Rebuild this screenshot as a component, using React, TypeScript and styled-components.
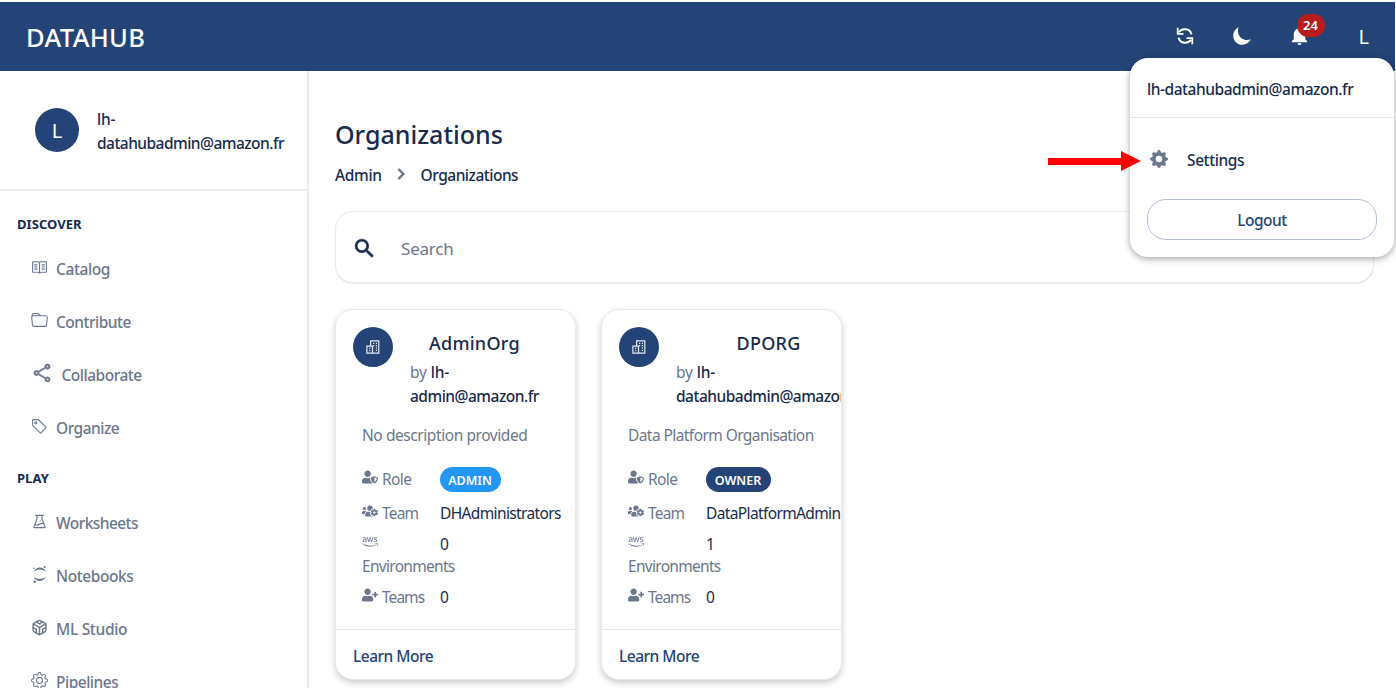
import React from "react";
import styled, { createGlobalStyle, css } from "styled-components";
import { VscBook } from "react-icons/vsc";
import { BsFolder, BsTag, BsGear, BsGearFill } from "react-icons/bs";
import { AiOutlineExperiment } from "react-icons/ai";
import { SiJupyter } from "react-icons/si";
import { FiCodesandbox } from "react-icons/fi";
import { MdNotifications, MdSearch, MdChevronRight, MdOutlineShare } from "react-icons/md";
import { FaUserShield, FaUsersCog, FaUserPlus, FaAws } from "react-icons/fa";
import { IoMoonSharp } from "react-icons/io5";

const navy = "#244377";
const ink = "#172b4d";
const muted = "#6b778c";

const Global = createGlobalStyle`
  * { box-sizing: border-box; }
  body { margin: 0; background: #fff; color: ${ink}; overflow: hidden;
    font-family: "Noto Sans", "Open Sans", sans-serif; }
  svg { display: block; flex: none; }
  svg path[d^="M0 0h24v24H0"] { stroke: none; }
`;

const Label = styled.span<{ $size?: number; $weight?: number; $color?: string; $track?: number }>`
  font-size: ${(p) => p.$size ?? 15.5}px;
  font-weight: ${(p) => p.$weight ?? 400};
  color: ${(p) => p.$color ?? "inherit"};
  letter-spacing: ${(p) => p.$track ?? -0.5}px;
  white-space: nowrap;
`;

const Page = styled.div`
  position: relative;
  height: 688px;
  padding: 2px 1px 0 0;
  overflow: hidden;
  display: flex;
  flex-direction: column;
`;
const TopBar = styled.header`
  height: 69px;
  flex: none;
  background: ${navy};
  color: #fff;
  display: flex;
  align-items: center;
  justify-content: space-between;
  padding: 0 26px 0 26px;
`;
const Tools = styled.div`
  display: flex;
  align-items: center;
  gap: 38px;
  > svg { margin-top: -1px; }
  > span { margin-left: 10px; }
`;
const Bell = styled.div`
  position: relative;
  width: 23px;
  margin: -2px 0 0 -2px;
`;
const Count = styled.span`
  position: absolute;
  left: 9px;
  top: -10px;
  width: 28px;
  height: 23px;
  border-radius: 12px;
  background: #b71c1c;
  font-size: 13px;
  font-weight: 600;
  line-height: 23px;
  text-align: center;
`;
const Body = styled.div`
  flex: 1;
  min-height: 0;
  display: flex;
`;
const Side = styled.aside`
  width: 309px;
  flex: none;
  border-right: 2px solid #ececec;
  overflow: hidden;
`;
const Profile = styled.div`
  height: 120px;
  border-bottom: 2px solid #ececec;
  display: flex;
  align-items: center;
  gap: 18px;
  padding-left: 35px;
`;
const Avatar = styled.div<{ $size: number }>`
  width: ${(p) => p.$size}px;
  height: ${(p) => p.$size}px;
  flex: none;
  border-radius: 50%;
  background: ${navy};
  color: #fff;
  display: flex;
  align-items: center;
  justify-content: center;
  font-size: 20px;
`;
const Stack = styled.div<{ $drop?: number }>`
  display: flex;
  flex-direction: column;
  line-height: 24px;
  padding-top: ${(p) => p.$drop ?? 0}px;
`;
const Section = styled.h2<{ $top: number }>`
  margin: 0;
  padding: ${(p) => p.$top}px 0 8px 17px;
  font-size: 13px;
  line-height: 20px;
  font-weight: 700;
  letter-spacing: 0.05px;
`;
const Item = styled.div<{ $wide?: boolean }>`
  height: 53px;
  color: ${muted};
  display: flex;
  align-items: center;
  gap: ${(p) => (p.$wide ? 9 : 8.5)}px;
  padding-left: ${(p) => (p.$wide ? 30.5 : 30.5)}px;
  svg { margin-top: -3px; }
`;
const Main = styled.main`
  flex: 1;
  padding: 47px 21px 0 26px;
`;
const Title = styled.h1`
  margin: 0;
  font-size: 25px;
  line-height: 32px;
  font-weight: 500;
`;
const Crumbs = styled.div`
  height: 24px;
  margin-top: 13px;
  display: flex;
  align-items: center;
  gap: 8.5px;
  svg { color: ${muted}; margin-top: -3px; }
`;
const panel = css`
  background: #fff;
  border: 1px solid #e9e9e9;
  border-radius: 18px;
`;
const SearchBox = styled.div`
  ${panel}
  height: 73px;
  margin-top: 24px;
  border-bottom-width: 2px;
  display: flex;
  align-items: center;
  gap: 24px;
  padding: 2px 0 0 16px;
`;
const Cards = styled.div`
  display: flex;
  gap: 25px;
  margin-top: 25px;
`;
const CardBox = styled.article`
  ${panel}
  width: 241px;
  height: 371px;
  overflow: hidden;
  box-shadow: 0 3px 6px rgba(0, 0, 0, 0.2);
  display: flex;
  flex-direction: column;
`;
const CardHead = styled.div`
  display: flex;
  gap: 17px;
  padding: 17px 0 0 17px;
  height: 98px;
`;
const Name = styled.div<{ $indent: number }>`
  line-height: 32px;
  padding-left: ${(p) => p.$indent}px;
`;
const Desc = styled.div`
  padding: 15px 0 0 26px;
  height: 42px;
  line-height: 24px;
`;
const Fields = styled.dl`
  margin: 0;
  padding: 16px 0 0 26px;
  flex: 1;
`;
const Field = styled.div<{ $h: number }>`
  display: flex;
  height: ${(p) => p.$h}px;
`;
const Term = styled.dt`
  width: 78px;
  flex: none;
  display: flex;
  flex-wrap: wrap;
  align-content: flex-start;
  gap: 5px 4px;
  line-height: 22px;
  padding-top: 2px;
  color: ${muted};
  svg { margin-top: 1px; }
`;
const Value = styled.dd`
  margin: 0;
  padding-top: 2px;
  line-height: 22px;
`;
const Pill = styled.span<{ $bg: string; $w: number }>`
  display: block;
  width: ${(p) => p.$w}px;
  height: 25px;
  border-radius: 13px;
  margin: -1px 0 0 -0.5px;
  background: ${(p) => p.$bg};
  color: #fff;
  font-size: 12.5px;
  line-height: 27px;
  font-weight: 600;
  text-align: center;
`;
const CardFoot = styled.div`
  height: 50px;
  border-top: 1px solid #e2e2e2;
  padding: 2px 0 0 17px;
  display: flex;
  align-items: center;
`;
const Menu = styled.div`
  position: absolute;
  z-index: 2;
  left: 1130px;
  top: 58px;
  width: 264px;
  height: 199px;
  border-radius: 18px;
  background: #fff;
  box-shadow: 0 2px 7px rgba(0, 0, 0, 0.35);
`;
const MenuHead = styled.div`
  height: 60px;
  border-bottom: 1px solid #e2e2e2;
  display: flex;
  align-items: center;
  padding: 2px 0 0 17px;
`;
const MenuItem = styled.div`
  height: 81px;
  display: flex;
  align-items: center;
  gap: 19.5px;
  padding: 3px 0 0 19.5px;
  svg { color: ${muted}; margin-top: -2px; }
`;
const Logout = styled.button`
  display: block;
  width: 230px;
  height: 41px;
  margin: 0 0 0 17px;
  padding: 1px 0 0;
  border: 1px solid #b5c0d8;
  border-radius: 19px;
  background: #fff;
  color: ${navy};
  font-family: inherit;
`;
const Arrow = styled.svg`
  position: absolute;
  z-index: 3;
  left: 1048px;
  top: 151px;
`;

function SyncIcon() {
  return (
    <svg width="18" height="18" viewBox="0 0 18 18" fill="none" stroke="currentColor" strokeWidth="2.1">
      <path d="M3 5.2C5.4 1.4 14 .6 15.4 7.4M15 12.8C12.6 16.6 4 17.4 2.6 10.6" />
      <path d="M1.7.8v6h5.8M16.3 17.2v-6h-5.8" strokeWidth="1.8" />
    </svg>
  );
}

function BuildingIcon() {
  return (
    <svg width="14" height="14" viewBox="0 0 14 14" fill="none" stroke="#e6ebf5" strokeWidth="1.2">
      <path d="M4.6 6.2V.8h8.2v12.4H.9v-7h5.6v7" />
      <path d="M7 3.4h1.2M9.8 3.4H11M7 5.6h1.2M9.8 5.6H11M9.8 7.9H11M9.8 10.3H11M3.1 8.4h1.2M3.1 10.6h1.2" />
    </svg>
  );
}

type Org = {
  name: string; indent: number; by: string; desc: string; descTrack: number;
  role: string; roleColor: string; roleWidth: number; team: string; envs: string;
};

const orgs: Org[] = [
  { name: "AdminOrg", indent: 19, by: "admin@amazon.fr", desc: "No description provided", descTrack: -0.43,
    role: "ADMIN", roleColor: "#2196f3", roleWidth: 61, team: "DHAdministrators", envs: "0" },
  { name: "DPORG", indent: 60.5, by: "datahubadmin@amazon.fr", desc: "Data Platform Organisation", descTrack: -0.57,
    role: "OWNER", roleColor: navy, roleWidth: 65, team: "DataPlatformAdmin", envs: "1" },
];

type NavItem = { icon: React.ReactNode; text: string; track?: number; wide?: boolean };

const discover: NavItem[] = [
  { icon: <VscBook size={17} />, text: "Catalog", track: -0.4 },
  { icon: <BsFolder size={17} />, text: "Contribute" },
  { icon: <MdOutlineShare size={22} strokeWidth={0.4} />, text: "Collaborate", wide: true },
  { icon: <BsTag size={17} />, text: "Organize" },
];
const play: NavItem[] = [
  { icon: <AiOutlineExperiment size={17} />, text: "Worksheets", track: -0.55 },
  { icon: <SiJupyter size={17} />, text: "Notebooks", track: -0.4 },
  { icon: <FiCodesandbox size={17} />, text: "ML Studio", track: -0.3 },
  { icon: <BsGear size={17} />, text: "Pipelines" },
];

function NavList({ items }: { items: NavItem[] }) {
  return (
    <>
      {items.map((i) => (
        <Item key={i.text} $wide={i.wide}>
          {i.icon}
          <Label $weight={500} $track={i.track}>{i.text}</Label>
        </Item>
      ))}
    </>
  );
}

function OrgCard({ o }: { o: Org }) {
  return (
    <CardBox>
      <CardHead>
        <Avatar $size={40}><BuildingIcon /></Avatar>
        <Stack>
          <Name $indent={o.indent}><Label $size={18} $weight={500} $track={0.25}>{o.name}</Label></Name>
          <span><Label $color={muted} $track={-0.1}>by </Label><Label $weight={500} $track={-0.2}>lh-</Label></span>
          <Label $weight={500}>{o.by}</Label>
        </Stack>
      </CardHead>
      <Desc><Label $color={muted} $track={o.descTrack}>{o.desc}</Label></Desc>
      <Fields>
        <Field $h={34}>
          <Term><FaUserShield size={16} /><Label $track={-0.6}>Role</Label></Term>
          <Value><Pill $bg={o.roleColor} $w={o.roleWidth}>{o.role}</Pill></Value>
        </Field>
        <Field $h={31}>
          <Term><FaUsersCog size={16} /><Label $track={-0.8}>Team</Label></Term>
          <Value><Label $track={-0.63}>{o.team}</Label></Value>
        </Field>
        <Field $h={53}>
          <Term><FaAws size={16} /><Label $track={-0.7}>Environments</Label></Term>
          <Value><Label>{o.envs}</Label></Value>
        </Field>
        <Field $h={30}>
          <Term><FaUserPlus size={16} /><Label $track={-0.95}>Teams</Label></Term>
          <Value><Label>0</Label></Value>
        </Field>
      </Fields>
      <CardFoot><Label $weight={500} $color={navy}>Learn More</Label></CardFoot>
    </CardBox>
  );
}

export default function App() {
  return (
    <Page>
      <Global />
      <TopBar>
        <Label $size={25.5} $weight={500} $track={0.35}>DATAHUB</Label>
        <Tools>
          <SyncIcon />
          <IoMoonSharp size={20} />
          <Bell><MdNotifications size={23} /><Count>24</Count></Bell>
          <Label $size={20} $track={0}>L</Label>
        </Tools>
      </TopBar>
      <Body>
        <Side>
          <Profile>
            <Avatar $size={44}>L</Avatar>
            <Stack $drop={2}>
              <Label $weight={500} $track={-0.2}>lh-</Label>
              <Label $weight={500} $track={-0.53}>datahubadmin@amazon.fr</Label>
            </Stack>
          </Profile>
          <Section $top={23}>DISCOVER</Section>
          <NavList items={discover} />
          <Section $top={14}>PLAY</Section>
          <NavList items={play} />
        </Side>
        <Main>
          <Title>Organizations</Title>
          <Crumbs>
            <Label $weight={500} $track={-0.35}>Admin</Label>
            <MdChevronRight size={22} strokeWidth={0.7} />
            <Label $weight={500} $track={-0.5}>Organizations</Label>
          </Crumbs>
          <SearchBox>
            <MdSearch size={25} strokeWidth={0.6} />
            <Label $size={17} $color={muted} $track={-0.2}>Search</Label>
          </SearchBox>
          <Cards>{orgs.map((o) => <OrgCard key={o.name} o={o} />)}</Cards>
        </Main>
      </Body>
      <Menu>
        <MenuHead><Label $weight={500} $track={-0.45}>lh-datahubadmin@amazon.fr</Label></MenuHead>
        <MenuItem><BsGearFill size={18} /><Label $weight={500} $track={-0.4}>Settings</Label></MenuItem>
        <Logout><Label $weight={500}>Logout</Label></Logout>
      </Menu>
      <Arrow width="93" height="20" viewBox="0 0 93 20" fill="#f00">
        <path d="M0 7h73V0l20 10-20 10v-6H0z" />
      </Arrow>
    </Page>
  );
}
